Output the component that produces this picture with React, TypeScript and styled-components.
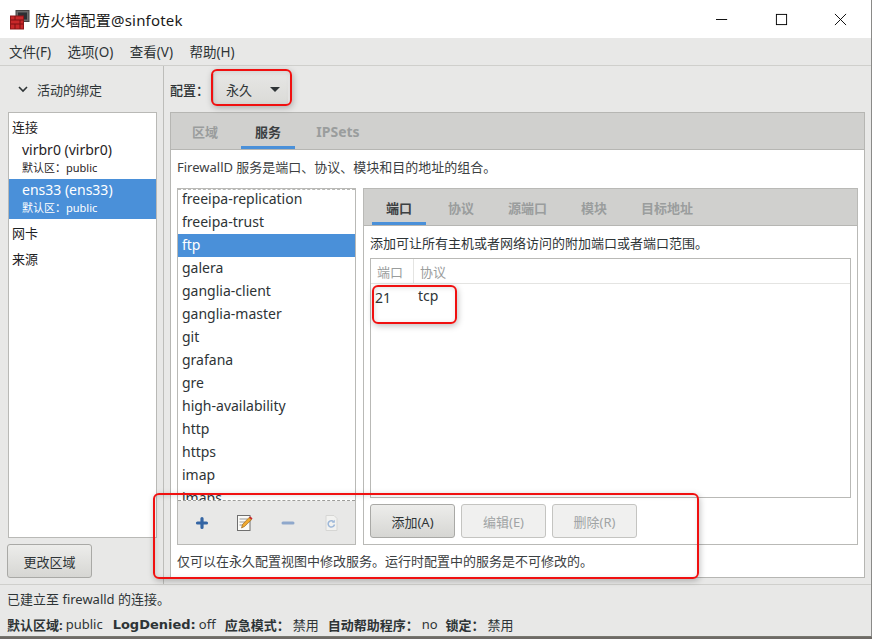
import React from "react";
import styled, { createGlobalStyle } from "styled-components";

const Global = createGlobalStyle`
  html, body { margin: 0; padding: 0; background: #6e6a66; }
  * { box-sizing: border-box; }
  body { font-family: "Noto Sans", "Noto Sans CJK SC", sans-serif; font-size: 13px; color: #2e3436; }
`;

const services = [
  "freeipa-replication", "freeipa-trust", "ftp", "galera", "ganglia-client", "ganglia-master",
  "git", "grafana", "gre", "high-availability", "http", "https", "imap", "imaps",
];

const App = () => (
  <>
    <Global />
    <Window>
      <TitleBar>
        <AppIcon viewBox="0 0 20 20">
          <rect x="6" y="0.5" width="13" height="11" fill="#6b6b6b" stroke="#444" />
          <rect x="8" y="2.5" width="9" height="7" fill="#2c2f33" />
          <rect x="0.5" y="6" width="13" height="13" fill="#c8282a" stroke="#8d1618" />
          <path d="M1 10h12M1 14h12M5 6v4M10 10v4M5 14v5M10 14v5" stroke="#7c1113" strokeWidth="1" />
        </AppIcon>
        <TitleText>防火墙配置@sinfotek</TitleText>
        <WindowControls>
          <WinButton viewBox="0 0 14 14"><path d="M0 7h12" stroke="#000" strokeWidth="1" /></WinButton>
          <WinButton viewBox="0 0 14 14"><rect x="1.5" y="1.5" width="11" height="11" fill="none" stroke="#000" /></WinButton>
          <WinButton viewBox="0 0 14 14"><path d="M1 1l12 12M13 1L1 13" stroke="#000" /></WinButton>
        </WindowControls>
      </TitleBar>

      <MenuBar>
        <MenuItem>文件(F)</MenuItem>
        <MenuItem>选项(O)</MenuItem>
        <MenuItem>查看(V)</MenuItem>
        <MenuItem>帮助(H)</MenuItem>
      </MenuBar>

      <Body>
        <Sidebar>
          <Expander>
            <svg width="12" height="12" viewBox="0 0 12 12">
              <path d="M2 4l4 4 4-4" fill="none" stroke="#2e3436" strokeWidth="1.6" />
            </svg>
            <span>活动的绑定</span>
          </Expander>
          <BindingList>
            <GroupRow>连接</GroupRow>
            <BindingRow>
              <BindingName>virbr0 (virbr0)</BindingName>
              <BindingZone>默认区：public</BindingZone>
            </BindingRow>
            <BindingRow $selected>
              <BindingName>ens33 (ens33)</BindingName>
              <BindingZone>默认区：public</BindingZone>
            </BindingRow>
            <GroupRow $gap>网卡</GroupRow>
            <GroupRow $gap>来源</GroupRow>
          </BindingList>
          <SidebarFooter>
            <Button>更改区域</Button>
          </SidebarFooter>
        </Sidebar>

        <Main>
          <ConfigRow>
            <strong>配置：</strong>
            <Combo>
              <span>永久</span>
              <ComboArrow />
            </Combo>
          </ConfigRow>

          <Notebook>
            <OuterTabs>
              <OuterTab>区域</OuterTab>
              <OuterTab $active>服务</OuterTab>
              <OuterTab $latin>IPSets</OuterTab>
            </OuterTabs>
            <NotebookPage>
              <Description>FirewallD 服务是端口、协议、模块和目的地址的组合。</Description>
              <Columns>
                <ServicePane>
                  <ServiceScroll>
                    <ServiceRows>
                      {services.map((s) => (
                        <ServiceRow key={s} $selected={s === "ftp"}>{s}</ServiceRow>
                      ))}
                    </ServiceRows>
                  </ServiceScroll>
                  <ServiceToolbar>
                    <ToolIcon viewBox="0 0 16 16">
                      <path d="M8 3.5v9M3.5 8h9" stroke="#3465a4" strokeWidth="3.2" strokeLinecap="round" />
                    </ToolIcon>
                    <ToolIcon viewBox="0 0 16 16">
                      <rect x="0.5" y="0.5" width="12.5" height="15" fill="#fbfbf8" stroke="#6f6f6f" />
                      <path d="M2.5 4h8M2.5 7h6M2.5 10h4" stroke="#999" />
                      <path d="M4.5 13l1-3.5 6.5-7 2.5 2.2-7 6.800z" fill="#efa92f" stroke="#8f5a12" strokeWidth=".6" />
                      <path d="M12 2.5l2.500 2.200 1-1.300-2-2z" fill="#c8282a" />
                    </ToolIcon>
                    <ToolIcon viewBox="0 0 16 16">
                      <path d="M3 8h10" stroke="#8fa8cc" strokeWidth="3" strokeLinecap="round" />
                    </ToolIcon>
                    <ToolIcon viewBox="0 0 16 16">
                      <path d="M3 .5h8l3 3v12H3z" fill="#f2f2f0" stroke="#d6d6d4" />
                      <path d="M11.5 9.5a3.200 3.200 0 1 1-.8-2.800" fill="none" stroke="#9db7d8" strokeWidth="1.5" />
                      <path d="M11.8 4.800v3h-3z" fill="#9db7d8" />
                    </ToolIcon>
                  </ServiceToolbar>
                </ServicePane>

                <DetailNotebook>
                  <InnerTabs>
                    <InnerTab $active>端口</InnerTab>
                    <InnerTab>协议</InnerTab>
                    <InnerTab>源端口</InnerTab>
                    <InnerTab>模块</InnerTab>
                    <InnerTab>目标地址</InnerTab>
                  </InnerTabs>
                  <DetailPage>
                    <DetailHint>添加可让所有主机或者网络访问的附加端口或者端口范围。</DetailHint>
                    <PortTable>
                      <PortHead>
                        <PortHeadCell $w={43}>端口</PortHeadCell>
                        <PortHeadCell>协议</PortHeadCell>
                      </PortHead>
                      <PortRow>
                        <PortCell $w={43}>21</PortCell>
                        <PortProto>tcp</PortProto>
                      </PortRow>
                    </PortTable>
                    <ButtonRow>
                      <Button>添加(A)</Button>
                      <Button disabled>编辑(E)</Button>
                      <Button disabled>删除(R)</Button>
                    </ButtonRow>
                  </DetailPage>
                </DetailNotebook>
              </Columns>
              <FootNote>仅可以在永久配置视图中修改服务。运行时配置中的服务是不可修改的。</FootNote>
            </NotebookPage>
          </Notebook>
        </Main>
      </Body>

      <StatusBar>
        <StatusLine>已建立至 firewalld 的连接。</StatusLine>
        <StatusLine>
          <StatusKey>默认区域:</StatusKey><StatusValue $right={10}>public</StatusValue>
          <StatusKey $latin>LogDenied:</StatusKey><StatusValue $right={9}>off</StatusValue>
          <StatusKey>应急模式：</StatusKey><StatusValue $right={9}>禁用</StatusValue>
          <StatusKey>自动帮助程序：</StatusKey><StatusValue $right={8}>no</StatusValue>
          <StatusKey>锁定：</StatusKey><StatusValue>禁用</StatusValue>
        </StatusLine>
      </StatusBar>

      <RedMark $x={211} $y={69} $w={81} $h={37} />
      <RedMark $x={372} $y={285} $w={85} $h={39} />
      <RedMark $x={153} $y={493} $w={546} $h={86} />
    </Window>
  </>
);

export default App;

const Window = styled.div`
  position: relative;
  width: 872px;
  height: 637px;
  background: #e8e8e7;
  border-right: 1px solid #8a8a88;
  border-bottom: 1px solid #77776f;
  display: flex;
  flex-direction: column;
  overflow: hidden;
`;

const TitleBar = styled.div`
  height: 38px;
  padding: 1px 0 0 10px;
  background: #fff;
  display: flex;
  align-items: center;
  flex-shrink: 0;
`;

const AppIcon = styled.svg`
  width: 20px;
  height: 20px;
  margin-right: 5px;
`;

const TitleText = styled.div`
  font-size: 15px;
  letter-spacing: 0.2px;
  color: #1a1a1a;
  flex: 1;
`;

const WindowControls = styled.div`
  display: flex;
  gap: 46px;
  padding-right: 24px;
  align-items: center;
`;

const WinButton = styled.svg`
  width: 13px;
  height: 13px;
`;

const MenuBar = styled.div`
  height: 28px;
  padding: 0 0 2px 9px;
  display: flex;
  gap: 16.5px;
  align-items: center;
  border-bottom: 1px solid #cfcfcc;
  flex-shrink: 0;
`;

const MenuItem = styled.div`
  font-size: 13.5px;
  color: #2e3436;
`;

const Body = styled.div`
  height: 519px;
  display: flex;
  border-bottom: 1px solid #cfcfcc;
  flex-shrink: 0;
`;

const Sidebar = styled.div`
  width: 164px;
  padding: 0 6px 0 7px;
  border-right: 1px solid #bdbdba;
  display: flex;
  flex-direction: column;
`;

const Expander = styled.div`
  height: 46px;
  padding: 0 0 0 10px;
  display: flex;
  gap: 8px;
  align-items: center;
  color: #2e3436;
`;

const BindingList = styled.div`
  height: 426px;
  margin-left: 1px;
  padding-top: 1px;
  background: #fff;
  border: 1px solid #b9b9b6;
`;

const GroupRow = styled.div<{ $gap?: boolean }>`
  height: ${(p) => (p.$gap ? "26px" : "25px")};
  padding-left: 3px;
  padding-top: ${(p) => (p.$gap ? "4px" : "3px")};
  font-size: 13px;
  color: #1f2224;
`;

const BindingRow = styled.div<{ $selected?: boolean }>`
  height: 40px;
  padding: 2px 0 0 13px;
  background: ${(p) => (p.$selected ? "#4a90d9" : "transparent")};
  color: ${(p) => (p.$selected ? "#fff" : "#1f2224")};
  display: flex;
  flex-direction: column;
`;

const BindingName = styled.div`
  font-size: 14px;
  line-height: 18px;
`;

const BindingZone = styled.div`
  font-size: 11px;
  line-height: 18px;
`;

const SidebarFooter = styled.div`
  padding-top: 6px;
`;

const Button = styled.button`
  width: 85px;
  height: 34px;
  padding: 0;
  font-family: inherit;
  font-size: 13px;
  color: #2e3436;
  border: 1px solid #a9a9a6;
  border-radius: 3px;
  background: linear-gradient(#ededeb, #d6d6d3);

  &:disabled {
    color: #a0a4a5;
    border-color: #c4c4c1;
    background: #f0f0ef;
  }
`;

const Main = styled.div`
  flex: 1;
  min-width: 0;
  padding: 0 6px 6px 6px;
  display: flex;
  flex-direction: column;
`;

const ConfigRow = styled.div`
  height: 46px;
  display: flex;
  align-items: center;
  font-size: 13px;

  strong {
    font-weight: 500;
    width: 44px;
  }
`;

const Combo = styled.div`
  width: 75px;
  height: 31px;
  margin-left: -1px;
  padding: 0 8px 0 12px;
  display: flex;
  align-items: center;
  justify-content: space-between;
  border-left: 1px solid #c9c9c6;
  background: linear-gradient(#e6e6e4, #dadad7);
`;

const ComboArrow = styled.i`
  width: 0;
  height: 0;
  border-left: 5px solid transparent;
  border-right: 5px solid transparent;
  border-top: 5px solid #2e3436;
`;

const Notebook = styled.div`
  flex: 1;
  display: flex;
  flex-direction: column;
  border: 1px solid #b6b6b3;
`;

const OuterTabs = styled.div`
  height: 37px;
  padding-left: 7px;
  display: flex;
  background: #d0d0ce;
  border-bottom: 1px solid #b6b6b3;
`;

const OuterTab = styled.div<{ $active?: boolean; $latin?: boolean }>`
  width: ${(p) => (p.$latin ? "70px" : "54px")};
  margin-right: ${(p) => (p.$active ? "8px" : "9px")};
  text-align: center;
  padding-top: 9px;
  font-size: ${(p) => (p.$latin ? "14px" : "13px")};
  font-weight: 700;
  color: ${(p) => (p.$active ? "#3c4042" : "#9a9d9d")};
  border-bottom: ${(p) => (p.$active ? "3px solid #4a90d9" : "none")};
`;

const NotebookPage = styled.div`
  flex: 1;
  padding: 0 6px;
  background: #fff;
  display: flex;
  flex-direction: column;
`;

const Description = styled.div`
  height: 38px;
  padding-top: 8px;
  font-size: 13px;
  line-height: 18px;
  color: #3c4042;
`;

const Columns = styled.div`
  display: flex;
  gap: 7px;
  height: 357px;
`;

const ServicePane = styled.div`
  width: 179px;
  display: flex;
  flex-direction: column;
  border: 1px solid #b9b9b6;
`;

const ServiceScroll = styled.div`
  height: 312px;
  overflow: hidden;
  border-top: 1px dashed #b9b9b6;
  border-bottom: 1px dashed #9d9d9a;
`;

// the list is scrolled down a little in the picture
const ServiceRows = styled.div`
  margin-top: -2px;
`;

const ServiceRow = styled.div<{ $selected?: boolean }>`
  height: 23px;
  padding-left: 4px;
  font-size: 14px;
  line-height: 22px;
  background: ${(p) => (p.$selected ? "#4a90d9" : "transparent")};
  color: ${(p) => (p.$selected ? "#fff" : "#2e3436")};
`;

const ServiceToolbar = styled.div`
  flex: 1;
  padding: 0 16px;
  display: flex;
  justify-content: space-between;
  align-items: center;
  background: #e8e8e7;
`;

const ToolIcon = styled.svg`
  width: 16px;
  height: 16px;
`;

const DetailNotebook = styled.div`
  width: 495px;
  display: flex;
  flex-direction: column;
  border: 1px solid #b9b9b6;
`;

const InnerTabs = styled.div`
  height: 37px;
  padding-left: 8px;
  display: flex;
  background: #d0d0ce;
  border-bottom: 1px solid #b6b6b3;
`;

const InnerTab = styled.div<{ $active?: boolean }>`
  padding: 9px 14px 0;
  margin-right: ${(p) => (p.$active ? "8px" : "6px")};
  font-size: 13px;
  font-weight: 700;
  color: ${(p) => (p.$active ? "#3c4042" : "#9a9d9d")};
  border-bottom: ${(p) => (p.$active ? "3px solid #4a90d9" : "none")};
`;

const DetailPage = styled.div`
  flex: 1;
  padding: 0 6px;
  display: flex;
  flex-direction: column;
`;

const DetailHint = styled.div`
  height: 32px;
  padding-top: 8px;
  font-size: 13px;
  line-height: 18px;
  color: #2e3436;
`;

const PortTable = styled.div`
  height: 240px;
  border: 1px solid #b9b9b6;
`;

const PortHead = styled.div`
  height: 25px;
  display: flex;
  border-bottom: 1px solid #e4e4e2;
`;

const PortHeadCell = styled.div<{ $w?: number }>`
  ${(p) => p.$w && `width: ${p.$w}px; border-right: 1px solid #e4e4e2;`}
  padding-left: 6px;
  font-size: 13px;
  line-height: 26px;
  color: #9a9d9d;
`;

const PortRow = styled.div`
  height: 28px;
  display: flex;
  color: #2e3436;
`;

const PortCell = styled.div<{ $w?: number }>`
  width: ${(p) => p.$w}px;
  padding: 4px 0 0 4px;
  line-height: 20px;
  font-size: 14px;
`;

const PortProto = styled.div`
  padding: 2px 0 0 4px;
  line-height: 20px;
  font-size: 14px;
`;

const ButtonRow = styled.div`
  padding-top: 6px;
  display: flex;
  gap: 6px;
`;

const FootNote = styled.div`
  padding-top: 7px;
  font-size: 13px;
  line-height: 18px;
  color: #3c4042;
`;

const StatusBar = styled.div`
  padding-left: 7px;
  flex: 1;
`;

const StatusLine = styled.div`
  height: 26px;
  display: flex;
  align-items: center;
  font-size: 13px;
  color: #2e3436;
`;

const StatusKey = styled.span<{ $latin?: boolean }>`
  font-weight: 700;
  margin-right: 3px;
  ${(p) => p.$latin && "font-family: 'DejaVu Sans', sans-serif; font-size: 13px;"}
`;

const StatusValue = styled.span<{ $right?: number }>`
  margin-right: ${(p) => p.$right ?? 0}px;
`;

const RedMark = styled.div<{ $x: number; $y: number; $w: number; $h: number }>`
  position: absolute;
  left: ${(p) => p.$x}px;
  top: ${(p) => p.$y}px;
  width: ${(p) => p.$w}px;
  height: ${(p) => p.$h}px;
  border: 2px solid #f01010;
  border-radius: 6px;
  box-shadow: 1px 2px 6px rgba(0, 0, 0, 0.25), inset 1px 1px 5px rgba(0, 0, 0, 0.12);
  pointer-events: none;
`;
